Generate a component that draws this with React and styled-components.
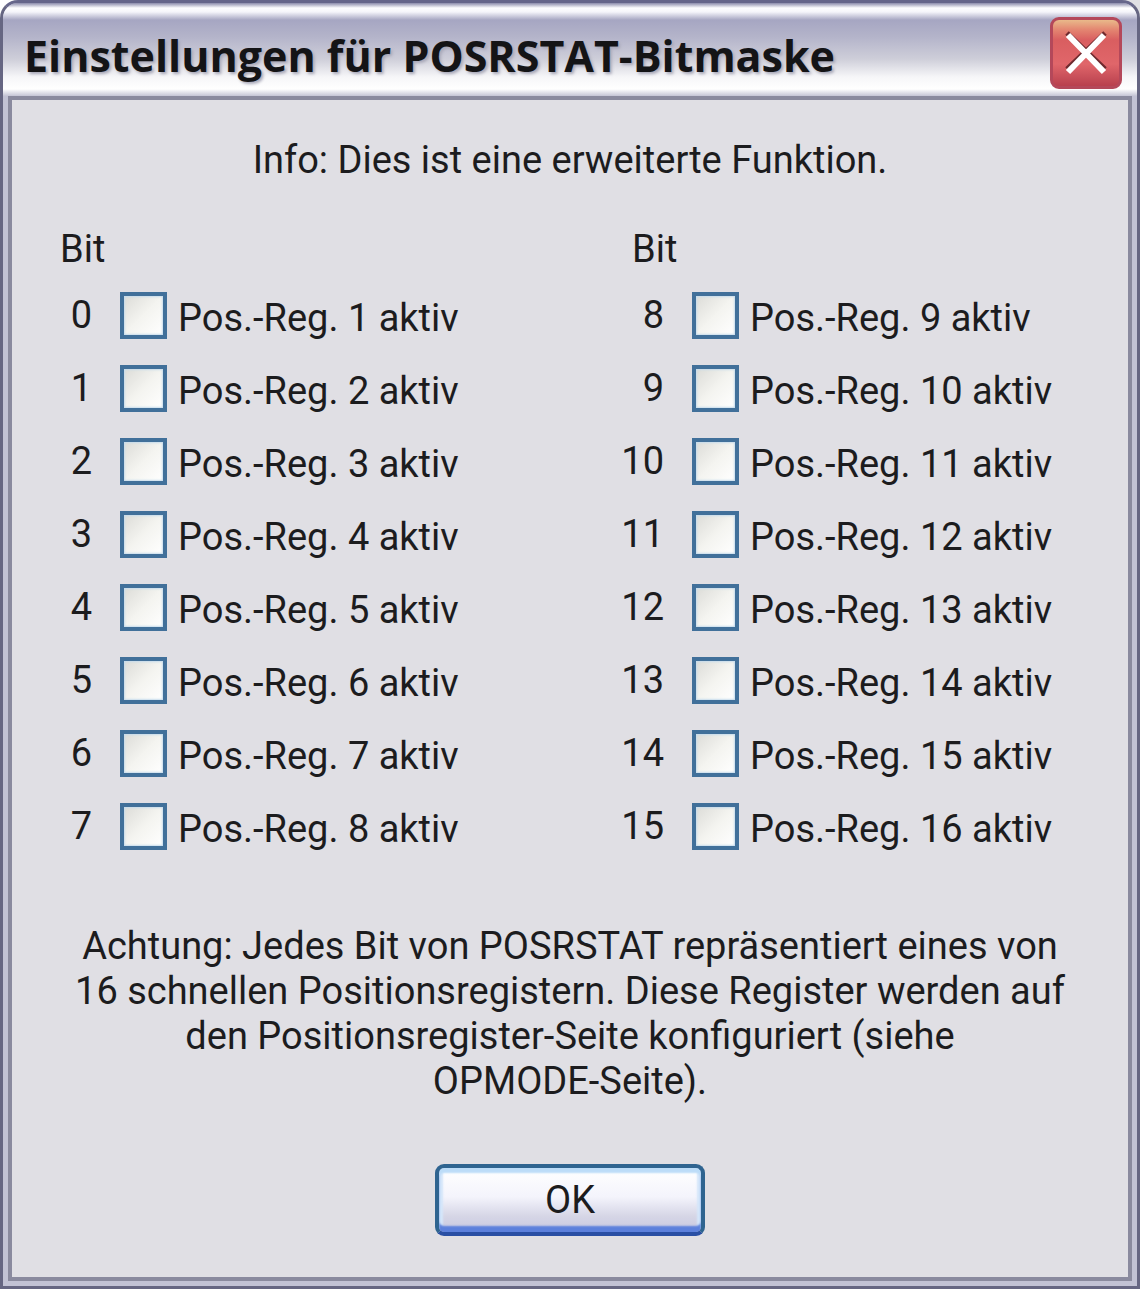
import React, { useState } from 'react';
import styled, { createGlobalStyle } from 'styled-components';

const COLUMN_STARTS = [0, 8];
const BITS_PER_COLUMN = 8;

const App = () => {
  const [mask, setMask] = useState(0);

  return (
    <>
      <GlobalStyle />
      <Window>
        <TitleBar>
          <Title>Einstellungen für POSRSTAT-Bitmaske</Title>
          <CloseButton type="button" aria-label="Schließen">
            <CloseIcon />
          </CloseButton>
        </TitleBar>
        <Client>
          <Text>Info: Dies ist eine erweiterte Funktion.</Text>
          <Columns>
            {COLUMN_STARTS.map((start) => (
              <BitColumn key={start} start={start} mask={mask} onChange={setMask} />
            ))}
          </Columns>
          <Text>
            Achtung: Jedes Bit von POSRSTAT repräsentiert eines von
            <br />
            16 schnellen Positionsregistern. Diese Register werden auf
            <br />
            den Positionsregister-Seite konfiguriert (siehe
            <br />
            OPMODE-Seite).
          </Text>
          <OkButton type="button">OK</OkButton>
        </Client>
      </Window>
    </>
  );
};

const BitColumn = ({ start, mask, onChange }) => (
  <Column>
    <ColumnHeading>Bit</ColumnHeading>
    <BitList>
      {Array.from({ length: BITS_PER_COLUMN }, (_, i) => start + i).map((bit) => (
        <BitRow key={bit}>
          <BitNumber>{bit}</BitNumber>
          <Checkbox
            id={`bit-${bit}`}
            checked={(mask & (1 << bit)) !== 0}
            onChange={() => onChange(mask ^ (1 << bit))}
          />
          <BitLabel htmlFor={`bit-${bit}`}>Pos.-Reg. {bit + 1} aktiv</BitLabel>
        </BitRow>
      ))}
    </BitList>
  </Column>
);

const CloseIcon = () => (
  <svg width="44" height="44" viewBox="0 0 44 44" fill="none" aria-hidden="true">
    <path d="M3 2L41 38M41 2L3 38" stroke="#6e2a2e" strokeWidth="5" />
    <path d="M4 4L40 41M40 4L4 41" stroke="#fff" strokeWidth="6" />
  </svg>
);

export default App;

const GlobalStyle = createGlobalStyle`
  body {
    margin: 0;
    background: linear-gradient(90deg, #fff 50%, #e0e0e4 50%);
  }

  *, *::before, *::after {
    box-sizing: border-box;
  }
`;

const Window = styled.div`
  display: flex;
  flex-direction: column;
  min-height: 100vh;
  padding: 0 5px 5px;
  border: 3px solid #666682;
  border-top-color: #66668a;
  border-radius: 18px 18px 0 0;
  background: #c2c2d4;
  color: #1c1c1e;
  font-family: Roboto, 'Liberation Sans', sans-serif;
  font-size: 38px;
  line-height: 45px;
`;

const TitleBar = styled.header`
  display: flex;
  align-items: center;
  justify-content: space-between;
  height: 93px;
  margin: 0 -5px;
  padding: 6px 15px 0 21px;
  border-radius: 15px 15px 0 0;
  background: linear-gradient(
    #8c8cac 0,
    #ffffff 5px,
    #f4f4fa 9px,
    #a6a6c2 17px,
    #b4b4ca 34px,
    #ceced9 56px,
    #f6f6f8 74px,
    #ffffff 86px,
    #c4c4d4 93px
  );
`;

const Title = styled.h1`
  margin: 0;
  padding-top: 6px;
  color: #141416;
  font-family: 'Open Sans', sans-serif;
  font-size: 43px;
  font-weight: 700;
  line-height: 56px;
  white-space: nowrap;
  text-shadow: 2px 2px 3px #a8a8b8;
`;

const CloseButton = styled.button`
  display: flex;
  flex: none;
  align-items: center;
  justify-content: center;
  width: 72px;
  height: 72px;
  padding: 0;
  border: 3px solid #b4485a;
  border-radius: 9px;
  background: linear-gradient(#e9b98a 0, #e38470 10px, #d95e60 20px, #e0666a 44px, #b8404e 100%);
`;

const Client = styled.main`
  display: flex;
  flex: 1;
  flex-direction: column;
  align-items: center;
  padding: 38px 0 41px;
  border: 4px solid #8a8a9e;
  background: #e0dfe4;
`;

const Text = styled.p`
  margin: 0;
  text-align: center;
`;

const Columns = styled.div`
  display: grid;
  grid-template-columns: 1fr 1fr;
  column-gap: 72px;
  align-self: stretch;
  margin: 44px 0 74px;
  padding: 0 8px 0 36px;
`;

const Column = styled.section`
  display: flex;
  flex-direction: column;
  gap: 20px;
`;

const ColumnHeading = styled.h2`
  margin: 0;
  padding-left: 12px;
  font-size: inherit;
  font-weight: 400;
`;

const BitList = styled.div`
  display: flex;
  flex-direction: column;
  gap: 26px;
`;

const BitRow = styled.div`
  display: flex;
  align-items: center;
  height: 47px;
`;

const BitNumber = styled.span`
  width: 44px;
  margin-right: 28px;
  text-align: right;
`;

const Checkbox = styled.input.attrs({ type: 'checkbox' })`
  appearance: none;
  flex: none;
  width: 47px;
  height: 47px;
  margin: 0;
  border: 4px solid #41709a;
  background: linear-gradient(135deg, #dcdcd8, #f4f4f0 50%, #ffffff);
  box-shadow: inset 0 0 2px 1px #c6dcec;

  &:checked {
    background: #21a121;
  }
`;

const BitLabel = styled.label`
  padding: 5px 0 0 11px;
  white-space: nowrap;
`;

const OkButton = styled.button`
  width: 270px;
  height: 72px;
  margin-top: 60px;
  padding: 0;
  border: 4px solid #2f6490;
  border-bottom-color: #2a4fa4;
  border-radius: 9px;
  background: linear-gradient(#ffffff, #f4f4fc 45%, #d6d6e6 75%, #c8c8e0);
  box-shadow: inset 0 5px 2px #bcdcf8, inset 0 -6px 2px #5c80dc, inset 4px 0 2px #d4e6fa, inset -4px 0 2px #d4e6fa;
  color: inherit;
  font: inherit;
`;
